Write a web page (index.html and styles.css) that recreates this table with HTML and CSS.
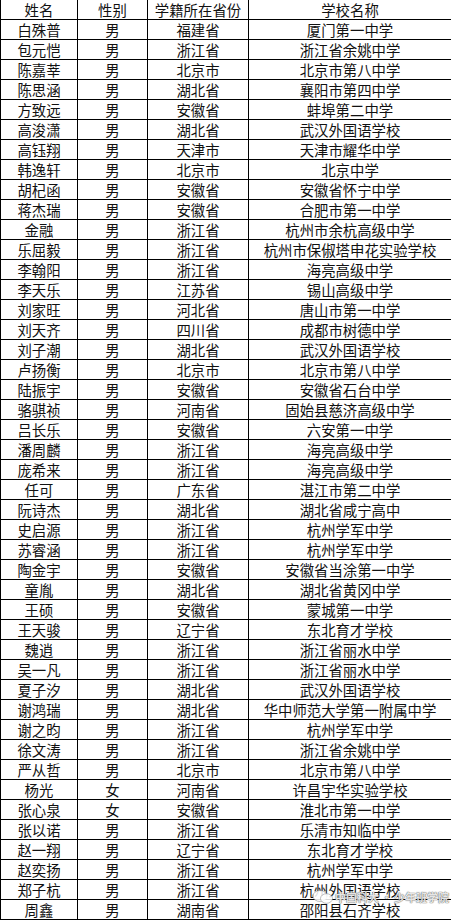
FILE: index.html
```html
<!DOCTYPE html>
<html lang="zh-CN">
<head>
<meta charset="utf-8">
<title>名单</title>
<link rel="stylesheet" href="styles.css">
</head>
<body>
<div class="sheet">
<table class="roster">
<colgroup><col class="c-name"><col class="c-sex"><col class="c-prov"><col class="c-school"></colgroup>
<thead>
<tr><th>姓名</th><th>性别</th><th>学籍所在省份</th><th>学校名称</th></tr>
</thead>
<tbody>
<tr><td>白殊普</td><td>男</td><td>福建省</td><td>厦门第一中学</td></tr>
<tr><td>包元恺</td><td>男</td><td>浙江省</td><td>浙江省余姚中学</td></tr>
<tr><td>陈嘉莘</td><td>男</td><td>北京市</td><td>北京市第八中学</td></tr>
<tr><td>陈思涵</td><td>男</td><td>湖北省</td><td>襄阳市第四中学</td></tr>
<tr><td>方致远</td><td>男</td><td>安徽省</td><td>蚌埠第二中学</td></tr>
<tr><td>高浚潇</td><td>男</td><td>湖北省</td><td>武汉外国语学校</td></tr>
<tr><td>高钰翔</td><td>男</td><td>天津市</td><td>天津市耀华中学</td></tr>
<tr><td>韩逸轩</td><td>男</td><td>北京市</td><td>北京中学</td></tr>
<tr><td>胡杞函</td><td>男</td><td>安徽省</td><td>安徽省怀宁中学</td></tr>
<tr><td>蒋杰瑞</td><td>男</td><td>安徽省</td><td>合肥市第一中学</td></tr>
<tr><td>金融</td><td>男</td><td>浙江省</td><td>杭州市余杭高级中学</td></tr>
<tr><td>乐屈毅</td><td>男</td><td>浙江省</td><td>杭州市保俶塔申花实验学校</td></tr>
<tr><td>李翰阳</td><td>男</td><td>浙江省</td><td>海亮高级中学</td></tr>
<tr><td>李天乐</td><td>男</td><td>江苏省</td><td>锡山高级中学</td></tr>
<tr><td>刘家旺</td><td>男</td><td>河北省</td><td>唐山市第一中学</td></tr>
<tr><td>刘天齐</td><td>男</td><td>四川省</td><td>成都市树德中学</td></tr>
<tr><td>刘子潮</td><td>男</td><td>湖北省</td><td>武汉外国语学校</td></tr>
<tr><td>卢扬衡</td><td>男</td><td>北京市</td><td>北京市第八中学</td></tr>
<tr><td>陆振宇</td><td>男</td><td>安徽省</td><td>安徽省石台中学</td></tr>
<tr><td>骆骐祯</td><td>男</td><td>河南省</td><td>固始县慈济高级中学</td></tr>
<tr><td>吕长乐</td><td>男</td><td>安徽省</td><td>六安第一中学</td></tr>
<tr><td>潘周麟</td><td>男</td><td>浙江省</td><td>海亮高级中学</td></tr>
<tr><td>庞希来</td><td>男</td><td>浙江省</td><td>海亮高级中学</td></tr>
<tr><td>任可</td><td>男</td><td>广东省</td><td>湛江市第二中学</td></tr>
<tr><td>阮诗杰</td><td>男</td><td>湖北省</td><td>湖北省咸宁高中</td></tr>
<tr><td>史启源</td><td>男</td><td>浙江省</td><td>杭州学军中学</td></tr>
<tr><td>苏睿涵</td><td>男</td><td>浙江省</td><td>杭州学军中学</td></tr>
<tr><td>陶金宇</td><td>男</td><td>安徽省</td><td>安徽省当涂第一中学</td></tr>
<tr><td>童胤</td><td>男</td><td>湖北省</td><td>湖北省黄冈中学</td></tr>
<tr><td>王硕</td><td>男</td><td>安徽省</td><td>蒙城第一中学</td></tr>
<tr><td>王天骏</td><td>男</td><td>辽宁省</td><td>东北育才学校</td></tr>
<tr><td>魏逍</td><td>男</td><td>浙江省</td><td>浙江省丽水中学</td></tr>
<tr><td>吴一凡</td><td>男</td><td>浙江省</td><td>浙江省丽水中学</td></tr>
<tr><td>夏子汐</td><td>男</td><td>湖北省</td><td>武汉外国语学校</td></tr>
<tr><td>谢鸿瑞</td><td>男</td><td>湖北省</td><td>华中师范大学第一附属中学</td></tr>
<tr><td>谢之昀</td><td>男</td><td>浙江省</td><td>杭州学军中学</td></tr>
<tr><td>徐文涛</td><td>男</td><td>浙江省</td><td>浙江省余姚中学</td></tr>
<tr><td>严从哲</td><td>男</td><td>北京市</td><td>北京市第八中学</td></tr>
<tr><td>杨光</td><td>女</td><td>河南省</td><td>许昌宇华实验学校</td></tr>
<tr><td>张心泉</td><td>女</td><td>安徽省</td><td>淮北市第一中学</td></tr>
<tr><td>张以诺</td><td>男</td><td>浙江省</td><td>乐清市知临中学</td></tr>
<tr><td>赵一翔</td><td>男</td><td>辽宁省</td><td>东北育才学校</td></tr>
<tr><td>赵奕扬</td><td>男</td><td>浙江省</td><td>杭州学军中学</td></tr>
<tr><td>郑子杭</td><td>男</td><td>浙江省</td><td>杭州外国语学校</td></tr>
<tr><td>周鑫</td><td>男</td><td>湖南省</td><td>邵阳县石齐学校</td></tr>
</tbody>
</table>
<div class="watermark">
<svg class="wm-icon" width="22" height="14" viewBox="0 0 22 14" aria-hidden="true">
<ellipse cx="8" cy="6" rx="7" ry="5.5" fill="rgba(255,255,255,0.85)" stroke="rgba(120,120,120,0.6)" stroke-width="0.8"/>
<ellipse cx="14.5" cy="8.5" rx="6" ry="4.8" fill="rgba(255,255,255,0.85)" stroke="rgba(120,120,120,0.6)" stroke-width="0.8"/>
</svg>
<span class="wm-text">中国科大</span><span class="wm-sep">·</span><span class="wm-text">少年班学院</span>
</div>
</div>
</body>
</html>
```

FILE: styles.css
```css
html, body {
  margin: 0;
  padding: 0;
  background: #ffffff;
}

.sheet {
  position: relative;
  width: 451px;
  height: 920px;
  overflow: hidden;
}

.roster {
  border-collapse: collapse;
  table-layout: fixed;
  width: 451px;
  margin-top: -1px;
  font-family: "Noto Sans CJK SC", "Noto Sans", sans-serif;
  font-size: 14.4px;
  color: #111111;
}

.c-name { width: 77px; }
.c-sex { width: 70px; }
.c-prov { width: 101px; }
.c-school { width: 203px; }

.roster th,
.roster td {
  border: 1px solid #000000;
  height: 19px;
  padding: 0;
  text-align: center;
  vertical-align: middle;
  font-weight: normal;
  line-height: 19px;
  white-space: nowrap;
  overflow: hidden;
}

.watermark {
  position: absolute;
  left: 312px;
  top: 890px;
  display: flex;
  align-items: center;
  gap: 1px;
  font-family: "Noto Sans CJK SC", sans-serif;
  font-size: 11px;
  font-weight: bold;
  color: rgba(255, 255, 255, 0.85);
  text-shadow: 0 0 1px rgba(90, 90, 90, 0.9), 0 0 1px rgba(90, 90, 90, 0.9);
  line-height: 14px;
}

.wm-icon {
  display: block;
}

.wm-sep {
  margin: 0 1px;
}
```
